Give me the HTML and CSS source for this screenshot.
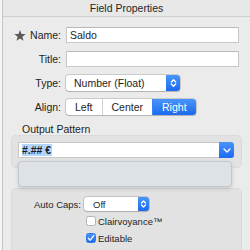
FILE: index.html
```html
<!DOCTYPE html>
<html>
<head>
<meta charset="utf-8">
<link rel="stylesheet" href="styles.css">
</head>
<body>
<div class="window">
  <div class="titlebar">Field Properties</div>
  <div class="content">
    <div class="form">
      <div class="lbl"><svg class="star" viewBox="0 0 12 11"><polygon points="6,0 7.5,3.9 11.7,4.1 8.4,6.7 9.5,10.8 6,8.5 2.5,10.8 3.6,6.7 0.3,4.1 4.5,3.9"/></svg>Name:</div>
      <div class="field">Saldo</div>
      <div class="lbl">Title:</div>
      <div class="field"></div>
      <div class="lbl">Type:</div>
      <div class="popup popup-type"><span class="ptext">Number (Float)</span><span class="stepper"><svg width="7" height="10" viewBox="0 0 7 10"><path d="M1.3 4 L3.5 1.8 L5.7 4 M1.3 6 L3.5 8.2 L5.7 6"/></svg></span></div>
      <div class="lbl">Align:</div>
      <div class="segmented"><span class="seg">Left</span><span class="seg">Center</span><span class="seg on">Right</span></div>
    </div>
    <div class="section-title">Output Pattern</div>
    <div class="box box-pattern">
      <div class="combo">
        <div class="combo-field"><span class="sel">#.## €</span></div>
        <span class="combo-btn"><svg width="8" height="5" viewBox="0 0 8 5"><path d="M1 1 L4 4 L7 1"/></svg></span>
      </div>
      <div class="menu"></div>
    </div>
    <div class="box box-options">
      <div class="opts">
        <div class="olbl">Auto Caps:</div>
        <div class="popup popup-small"><span class="ptext">Off</span><span class="stepper"><svg width="7" height="10" viewBox="0 0 7 10"><path d="M1.5 4 L3.5 2 L5.5 4 M1.5 6 L3.5 8 L5.5 6"/></svg></span></div>
        <div class="check"><span class="cb"></span><span>Clairvoyance™</span></div>
        <div class="check"><span class="cb on"><svg width="8" height="8" viewBox="0 0 8 8"><path d="M1.3 4.2 L3.2 6.2 L6.8 1.6"/></svg></span><span>Editable</span></div>
      </div>
    </div>
  </div>
</div>
</body>
</html>
```

FILE: styles.css
```css
* { box-sizing: border-box; }
html, body { margin: 0; padding: 0; }
body {
  width: 250px;
  height: 250px;
  overflow: hidden;
  background: #f5f5f5;
  font-family: "Liberation Sans", Arial, sans-serif;
  font-size: 10.5px;
  color: #1e1e1e;
}
.window {
  margin-left: 2px;
  height: 250px;
  border-left: 1px solid #c4c4c4;
  background: #ebebeb;
}
.titlebar {
  height: 17px;
  line-height: 16px;
  text-align: center;
  background: #e8e8e8;
  border-bottom: 1px solid #cfcfcf;
  color: #262626;
}
.form {
  display: grid;
  grid-template-columns: 58px 1fr;
  grid-auto-rows: 16px;
  column-gap: 5px;
  row-gap: 8px;
  align-items: center;
  padding: 10px 11px 0 0;
}
.lbl {
  display: flex;
  justify-content: flex-end;
  align-items: center;
}
.star {
  width: 12px;
  height: 11px;
  margin-right: 4px;
  fill: #595959;
}
.field {
  height: 16px;
  background: #fff;
  border: 1px solid #c8c8c8;
  border-top-color: #b8b8b8;
  padding-left: 3px;
  line-height: 14px;
}
.popup {
  display: flex;
  align-items: stretch;
  background: #fff;
  border-radius: 3px;
  box-shadow: 0 0 0 0.5px rgba(0, 0, 0, 0.28), 0 1px 1px rgba(0, 0, 0, 0.12);
}
.popup .ptext {
  flex: 1;
  padding-left: 8px;
  display: flex;
  align-items: center;
}
.popup-type {
  width: 114px;
  height: 16px;
}
.stepper {
  width: 14px;
  background: linear-gradient(#4a95fa, #1b6af0);
  border-radius: 0 3px 3px 0;
  display: flex;
  align-items: center;
  justify-content: center;
}
.stepper svg path, .combo-btn svg path, .cb svg path {
  fill: none;
  stroke: #fff;
  stroke-width: 1.3;
  stroke-linecap: round;
  stroke-linejoin: round;
}
.segmented {
  justify-self: start;
  display: flex;
  height: 16px;
  background: #fff;
  border-radius: 3px;
  box-shadow: 0 0 0 0.5px rgba(0, 0, 0, 0.28), 0 1px 1px rgba(0, 0, 0, 0.12);
}
.seg {
  padding: 0 9px;
  line-height: 16px;
  border-left: 1px solid #d2d2d2;
}
.seg:first-child { border-left: none; }
.seg.on {
  background: linear-gradient(#4a95fa, #1b6af0);
  color: #fff;
  border-left-color: #3a82f5;
  border-radius: 0 3px 3px 0;
}
.section-title {
  margin: 8px 0 0 19px;
  height: 12px;
  line-height: 12px;
}
.box {
  margin: 0 8px;
  background: #e2e2e2;
  border: 1px solid #dadada;
  border-radius: 5px;
}
.box-pattern {
  position: relative;
  padding: 6px 7px 9px 6px;
}
.combo {
  display: flex;
  height: 16px;
}
.combo-field {
  flex: 1;
  background: #fff;
  border: 1px solid #c8c8c8;
  border-right: none;
  padding-left: 3px;
  display: flex;
  align-items: center;
}
.sel {
  background: #b3d6fe;
  line-height: 12px;
  font-weight: bold;
  padding: 0 1px 0 0;
}
.combo-btn {
  width: 15px;
  background: linear-gradient(#4a95fa, #1b6af0);
  border-radius: 0 3px 3px 0;
  display: flex;
  align-items: center;
  justify-content: center;
}
.menu {
  position: absolute;
  top: 25px;
  left: 6px;
  width: 214px;
  height: 26px;
  background: #dde2e6;
  border: 1px solid #c3c7cb;
  border-radius: 4px;
  box-shadow: 0 2px 4px rgba(0, 0, 0, 0.14);
}
.box-options {
  margin-top: 20px;
  height: 62px;
  border-bottom: none;
  border-radius: 5px 5px 0 0;
  padding-top: 8px;
  font-size: 9.5px;
}
.opts {
  display: grid;
  grid-template-columns: 69px 1fr;
  grid-auto-rows: 14px;
  column-gap: 3px;
  row-gap: 3px;
  align-items: center;
}
.olbl { text-align: right; }
.popup-small {
  width: 65px;
  height: 14px;
}
.popup-small .ptext { padding-left: 9px; }
.popup-small .stepper { width: 11px; }
.check {
  grid-column: 2;
  display: flex;
  align-items: center;
  gap: 2px;
  margin-left: 2px;
}
.cb {
  width: 10px;
  height: 10px;
  background: #fff;
  border: 1px solid #b3b3b3;
  border-radius: 2.5px;
  display: flex;
  align-items: center;
  justify-content: center;
}
.cb.on {
  background: linear-gradient(#4a95fa, #1b6af0);
  border-color: #2c74ee;
}
```
